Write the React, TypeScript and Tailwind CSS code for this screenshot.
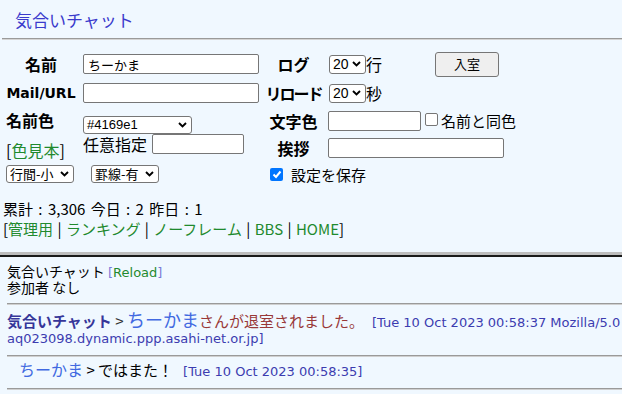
import React from "react";

const JP = "font-['Noto_Sans_CJK_JP',sans-serif]";
const DV = "font-['DejaVu_Sans','Noto_Sans_CJK_JP',sans-serif]";
const LS = "font-['Liberation_Sans','Noto_Sans_CJK_JP',sans-serif]";

function Chev() {
  return (
    <svg width="9" height="6" viewBox="0 0 9 6" className="shrink-0">
      <path d="M1 1l3.5 3.5L8 1" fill="none" stroke="#000" strokeWidth="1.9" />
    </svg>
  );
}

function Sel({ cls, text, tcls }: { cls: string; text: string; tcls: string }) {
  return (
    <div
      className={
        "flex items-center justify-between bg-white border border-[#767676] rounded-[3px] pl-[3px] pr-[4px] " +
        cls
      }
    >
      <span className={tcls}>{text}</span>
      <Chev />
    </div>
  );
}

function Input({ cls, value }: { cls: string; value?: string }) {
  return (
    <input
      readOnly
      value={value ?? ""}
      className={
        "bg-white border border-[#767676] rounded-[2px] pl-[4px] text-[13px] outline-none " + JP + " " + cls
      }
    />
  );
}

function Check({ checked, cls }: { checked?: boolean; cls: string }) {
  if (checked) {
    return (
      <span className={"flex items-center justify-center w-[13px] h-[13px] rounded-[2px] bg-[#0075ff] " + cls}>
        <svg width="10" height="9" viewBox="0 0 10 9">
          <path d="M1.5 4.5l2.5 2.5L8.5 1.5" fill="none" stroke="#fff" strokeWidth="2" />
        </svg>
      </span>
    );
  }
  return <span className={"block w-[13px] h-[13px] rounded-[2px] bg-white border border-[#767676] " + cls} />;
}

export default function App() {
  return (
    <div className={"w-[622px] h-[394px] overflow-hidden bg-[#f0f8ff] text-black " + JP}>
      {/* upper frame */}
      <div className="h-[252px] overflow-hidden">
        <div className="pl-[15px] pt-[9px] text-[17px] leading-[22px] text-[#3a3acc]">気合いチャット</div>
        <div className="ml-[2px] mt-[7px] h-px bg-[#9a9a9a]" />
        <div className="ml-[2px] h-px bg-[#d4d4d4]" />

        <div className="mt-[11px] pl-[6px] flex">
          {/* left block */}
          <div className="w-[259px] flex flex-col">
            <div className="h-[26px] flex items-center">
              <div className="w-[70px] text-center font-bold text-[16px] leading-[20px]">名前</div>
              <Input cls="ml-[7px] w-[176px] h-[20px]" value="ちーかま" />
            </div>
            <div className="h-[32px] flex items-center">
              <div className={"w-[70px] text-center font-bold text-[14px] leading-[20px] whitespace-nowrap " + DV}>
                Mail/URL
              </div>
              <Input cls="ml-[7px] w-[176px] h-[20px]" />
            </div>
            <div className="flex">
              <div className="w-[70px] flex flex-col">
                <div className="mt-[1px] font-bold text-[16px] leading-[20px]">名前色</div>
                <div className="mt-[10px] text-[16px] leading-[20px] whitespace-nowrap">
                  [<span className="text-[#1f8a2e]">色見本</span>]
                </div>
              </div>
              <div className="ml-[7px] flex flex-col">
                <Sel cls="mt-[7px] w-[109px] h-[18px]" text="#4169e1" tcls={"text-[13px] leading-[16px] " + LS} />
                <div className="h-[20px] flex items-center">
                  <span className="text-[16px] leading-[20px] whitespace-nowrap">任意指定</span>
                  <Input cls="ml-[5px] w-[92px] h-[20px]" />
                </div>
              </div>
            </div>
            <div className="mt-[5px] flex gap-[17px]">
              <Sel cls="w-[68px] h-[18px]" text="行間-小" tcls="text-[13px] leading-[16px]" />
              <Sel cls="w-[68px] h-[18px]" text="罫線-有" tcls="text-[13px] leading-[16px]" />
            </div>
          </div>

          {/* right block */}
          <div className="flex flex-col">
            <div className="h-[26px] flex items-center">
              <div className="w-[57px] flex justify-center font-bold text-[16px] leading-[20px]">ログ</div>
              <Sel cls="ml-[7px] w-[37px] h-[19px]" text="20" tcls={"text-[14px] leading-[16px] " + LS} />
              <span className="text-[16px] leading-[20px]">行</span>
              <button className="ml-[53px] w-[64px] h-[25px] bg-[#efefef] border border-[#767676] rounded-[3px] text-[13px] leading-[16px]">
                入室
              </button>
            </div>
            <div className="h-[32px] flex items-center">
              <div className="w-[57px] flex justify-center font-bold text-[16px] leading-[20px] whitespace-nowrap tracking-[-2px]">
                リロード
              </div>
              <Sel cls="ml-[7px] w-[37px] h-[19px]" text="20" tcls={"text-[14px] leading-[16px] " + LS} />
              <span className="text-[16px] leading-[20px]">秒</span>
            </div>
            <div className="h-[24px] flex items-center">
              <div className="w-[57px] flex justify-center font-bold text-[16px] leading-[20px] whitespace-nowrap">
                文字色
              </div>
              <Input cls="ml-[6px] w-[93px] h-[20px]" />
              <Check cls="ml-[4px] mb-[3px]" />
              <span className="ml-[3px] text-[15px] leading-[20px] whitespace-nowrap">名前と同色</span>
            </div>
            <div className="h-[30px] flex items-center">
              <div className="w-[57px] flex justify-center font-bold text-[16px] leading-[20px]">挨拶</div>
              <Input cls="ml-[6px] w-[176px] h-[20px]" />
            </div>
            <div className="h-[23px] flex items-center">
              <Check checked cls="ml-[5px]" />
              <span className="ml-[8px] text-[15px] leading-[20px] whitespace-nowrap">設定を保存</span>
            </div>
          </div>
        </div>

        <div className="mt-[13px] pl-[3px] text-[15px] leading-[20px] whitespace-nowrap [word-spacing:2px]">
          累計 : 3,306 今日 : 2 昨日 : 1
        </div>
        <div className="pl-[3px] text-[15px] leading-[20px] whitespace-nowrap [word-spacing:1px]">
          [<span className="text-[#1f8a2e]">管理用</span> | <span className="text-[#1f8a2e]">ランキング</span> |{" "}
          <span className="text-[#1f8a2e]">ノーフレーム</span> | <span className="text-[#1f8a2e]">BBS</span> |{" "}
          <span className="text-[#1f8a2e]">HOME</span>]
        </div>
      </div>

      {/* frame border */}
      <div className="h-[3px] bg-[#bdbdbd]" />
      <div className="h-[2px] bg-[#1a1a1a]" />

      {/* lower frame */}
      <div className="pl-[7px] pt-[6px]">
        <div className="h-[16px] text-[14px] leading-[16px] whitespace-nowrap">
          気合いチャット{" "}
          <span className={"text-[13px] text-[#7a7ad8] " + DV}>
            [<span className="text-[#1f8a2e]">Reload</span>]
          </span>
        </div>
        <div className="h-[16px] text-[14px] leading-[16px] whitespace-nowrap">参加者 なし</div>
        <div className="mt-[8px] h-px bg-[#9a9a9a]" />
        <div className="h-px bg-[#cfcfcf]" />

        <div className="mt-[3px] h-[23px] leading-[23px] whitespace-nowrap">
          <span className="text-[15px] font-bold text-[#363699]">気合いチャット</span>
          <span className="text-[15px] text-[#333]"> &gt; </span>
          <span className="text-[18px] text-[#4169e1]">ちーかま</span>
          <span className="text-[15px] text-[#993838]">さんが退室されました。</span>
          <span className={"ml-[8px] text-[13px] text-[#3c3cb0] " + DV}>
            [Tue 10 Oct 2023 00:58:37 Mozilla/5.0 (Windows NT 10.0; Win64; x64)
          </span>
        </div>
        <div className={"h-[16px] text-[13px] leading-[16px] text-[#3c3cb0] whitespace-nowrap " + DV}>
          aq023098.dynamic.ppp.asahi-net.or.jp]
        </div>
        <div className="mt-[8px] h-px bg-[#9a9a9a]" />
        <div className="h-px bg-[#cfcfcf]" />

        <div className="mt-[1px] pl-[12px] h-[22px] leading-[22px] whitespace-nowrap">
          <span className="text-[16px] text-[#4169e1]">ちーかま</span>
          <span className="text-[15px]"> &gt; ではまた！</span>
          <span className={"ml-[10px] text-[13px] text-[#3c3cb0] " + DV}>[Tue 10 Oct 2023 00:58:35]</span>
        </div>
        <div className="mt-[8px] h-px bg-[#9a9a9a]" />
        <div className="h-px bg-[#cfcfcf]" />
      </div>
    </div>
  );
}
